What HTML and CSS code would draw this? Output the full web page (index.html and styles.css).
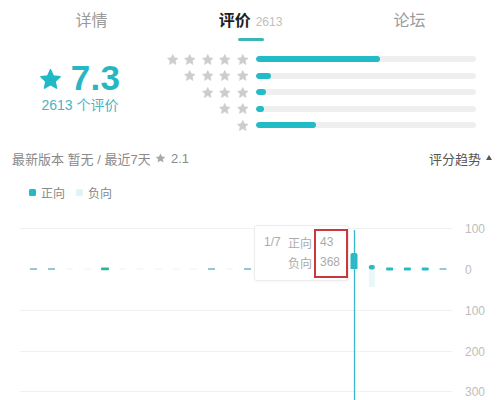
FILE: index.html
```html
<!DOCTYPE html>
<html lang="zh-CN">
<head>
<meta charset="utf-8">
<title>评价</title>
<link rel="stylesheet" href="styles.css">
</head>
<body>
<div class="page">
  <nav class="tabs">
    <div class="tab"><span class="tab-label">详情</span></div>
    <div class="tab tab-active">
      <span class="tab-label"><b>评价</b><span class="tab-count">2613</span></span>
      <i class="tab-bar"></i>
    </div>
    <div class="tab"><span class="tab-label">论坛</span></div>
  </nav>

  <section class="summary">
    <div class="score">
      <div class="score-main">
        <svg class="score-star" viewBox="1.5 1 21 20"><path d="M12 1.8l2.9 6.2 6.7.8-5 4.6 1.4 6.7L12 16.7 6 20.1l1.4-6.7-5-4.6 6.7-.8z"/></svg>
        <span class="score-num">7.3</span>
      </div>
      <div class="score-count">2613 个评价</div>
    </div>
    <div class="dist">
      <div class="dist-row">
        <div class="stars">
          <svg class="star" viewBox="1.5 1 21 20"><path d="M12 1.8l2.9 6.2 6.7.8-5 4.6 1.4 6.7L12 16.7 6 20.1l1.4-6.7-5-4.6 6.7-.8z"/></svg>
          <svg class="star" viewBox="1.5 1 21 20"><path d="M12 1.8l2.9 6.2 6.7.8-5 4.6 1.4 6.7L12 16.7 6 20.1l1.4-6.7-5-4.6 6.7-.8z"/></svg>
          <svg class="star" viewBox="1.5 1 21 20"><path d="M12 1.8l2.9 6.2 6.7.8-5 4.6 1.4 6.7L12 16.7 6 20.1l1.4-6.7-5-4.6 6.7-.8z"/></svg>
          <svg class="star" viewBox="1.5 1 21 20"><path d="M12 1.8l2.9 6.2 6.7.8-5 4.6 1.4 6.7L12 16.7 6 20.1l1.4-6.7-5-4.6 6.7-.8z"/></svg>
          <svg class="star" viewBox="1.5 1 21 20"><path d="M12 1.8l2.9 6.2 6.7.8-5 4.6 1.4 6.7L12 16.7 6 20.1l1.4-6.7-5-4.6 6.7-.8z"/></svg>
        </div>
        <div class="track"><div class="fill" style="width:56.4%"></div></div>
      </div>
      <div class="dist-row">
        <div class="stars">
          <svg class="star" viewBox="1.5 1 21 20"><path d="M12 1.8l2.9 6.2 6.7.8-5 4.6 1.4 6.7L12 16.7 6 20.1l1.4-6.7-5-4.6 6.7-.8z"/></svg>
          <svg class="star" viewBox="1.5 1 21 20"><path d="M12 1.8l2.9 6.2 6.7.8-5 4.6 1.4 6.7L12 16.7 6 20.1l1.4-6.7-5-4.6 6.7-.8z"/></svg>
          <svg class="star" viewBox="1.5 1 21 20"><path d="M12 1.8l2.9 6.2 6.7.8-5 4.6 1.4 6.7L12 16.7 6 20.1l1.4-6.7-5-4.6 6.7-.8z"/></svg>
          <svg class="star" viewBox="1.5 1 21 20"><path d="M12 1.8l2.9 6.2 6.7.8-5 4.6 1.4 6.7L12 16.7 6 20.1l1.4-6.7-5-4.6 6.7-.8z"/></svg>
        </div>
        <div class="track"><div class="fill" style="width:6.8%"></div></div>
      </div>
      <div class="dist-row">
        <div class="stars">
          <svg class="star" viewBox="1.5 1 21 20"><path d="M12 1.8l2.9 6.2 6.7.8-5 4.6 1.4 6.7L12 16.7 6 20.1l1.4-6.7-5-4.6 6.7-.8z"/></svg>
          <svg class="star" viewBox="1.5 1 21 20"><path d="M12 1.8l2.9 6.2 6.7.8-5 4.6 1.4 6.7L12 16.7 6 20.1l1.4-6.7-5-4.6 6.7-.8z"/></svg>
          <svg class="star" viewBox="1.5 1 21 20"><path d="M12 1.8l2.9 6.2 6.7.8-5 4.6 1.4 6.7L12 16.7 6 20.1l1.4-6.7-5-4.6 6.7-.8z"/></svg>
        </div>
        <div class="track"><div class="fill" style="width:4.6%"></div></div>
      </div>
      <div class="dist-row">
        <div class="stars">
          <svg class="star" viewBox="1.5 1 21 20"><path d="M12 1.8l2.9 6.2 6.7.8-5 4.6 1.4 6.7L12 16.7 6 20.1l1.4-6.7-5-4.6 6.7-.8z"/></svg>
          <svg class="star" viewBox="1.5 1 21 20"><path d="M12 1.8l2.9 6.2 6.7.8-5 4.6 1.4 6.7L12 16.7 6 20.1l1.4-6.7-5-4.6 6.7-.8z"/></svg>
        </div>
        <div class="track"><div class="fill" style="width:3.7%"></div></div>
      </div>
      <div class="dist-row">
        <div class="stars">
          <svg class="star" viewBox="1.5 1 21 20"><path d="M12 1.8l2.9 6.2 6.7.8-5 4.6 1.4 6.7L12 16.7 6 20.1l1.4-6.7-5-4.6 6.7-.8z"/></svg>
        </div>
        <div class="track"><div class="fill" style="width:27.3%"></div></div>
      </div>
    </div>
  </section>

  <div class="trend-head">
    <span class="recent">最新版本 暂无 / 最近7天 <svg class="mini-star" viewBox="1.5 1 21 20"><path d="M12 1.8l2.9 6.2 6.7.8-5 4.6 1.4 6.7L12 16.7 6 20.1l1.4-6.7-5-4.6 6.7-.8z"/></svg> 2.1</span>
    <span class="trend-toggle">评分趋势<span class="caret"></span></span>
  </div>

  <div class="legend">
    <span class="legend-item"><i class="swatch swatch-pos"></i>正向</span>
    <span class="legend-item"><i class="swatch swatch-neg"></i>负向</span>
  </div>

  <div class="chart">
    <svg class="chart-svg" width="501" height="190" viewBox="0 0 501 190">
      <g class="grid">
        <line x1="20" x2="452" y1="18.5" y2="18.5"/>
        <line x1="20" x2="452" y1="100.5" y2="100.5"/>
        <line x1="20" x2="452" y1="141.5" y2="141.5"/>
        <line x1="20" x2="452" y1="181.5" y2="181.5"/>
      </g>
      <g class="axis">
        <text x="465" y="22.5">100</text>
        <text x="465" y="63.5">0</text>
        <text x="465" y="104.5">100</text>
        <text x="465" y="145.5">200</text>
        <text x="465" y="185.5">300</text>
      </g>
      <g class="faint">
        <rect x="66" y="58.5" width="7" height="1.2"/>
        <rect x="84" y="58.5" width="7" height="1.2"/>
        <rect x="119" y="58.5" width="7" height="1.2"/>
        <rect x="137" y="58.5" width="7" height="1.2"/>
        <rect x="155" y="58.5" width="7" height="1.2"/>
        <rect x="173" y="58.5" width="7" height="1.2"/>
        <rect x="190" y="58.5" width="7" height="1.2"/>
        <rect x="226" y="58.5" width="7" height="1.2"/>
      </g>
      <g class="dash">
        <rect x="30" y="58.2" width="7" height="1.6"/>
        <rect x="48" y="58.2" width="7" height="1.6"/>
        <rect x="208" y="58.2" width="7" height="1.6"/>
        <rect x="244" y="58.2" width="7" height="1.6"/>
        <rect x="439.5" y="58.2" width="7" height="1.6"/>
      </g>
      <rect class="green" x="101" y="57.6" width="8" height="2.6" rx="1"/>
      <rect class="neg" x="368.8" y="59" width="6" height="18"/>
      <rect class="pos" x="368.8" y="55" width="6" height="4.5" rx="2"/>
      <rect class="pos" x="386.1" y="57.6" width="7" height="2.8" rx="1"/>
      <rect class="pos" x="403.9" y="57.6" width="7" height="2.8" rx="1"/>
      <rect class="pos" x="421.7" y="57.6" width="7" height="2.8" rx="1"/>
      <path class="pos" d="M350.5 59V45a2 2 0 0 1 2-2h3a2 2 0 0 1 2 2v14z"/>
      <line class="cursor" x1="354.5" x2="354.5" y1="20" y2="190"/>
    </svg>
    <div class="tooltip">
      <span class="tip-idx">1/7</span><span>正向</span><span>43</span>
      <span></span><span>负向</span><span>368</span>
    </div>
    <div class="highlight"></div>
  </div>
</div>
</body>
</html>
```

FILE: styles.css
```css
* { box-sizing: border-box; }
html, body { margin: 0; padding: 0; background: #fff; }
body {
  font-family: "Liberation Sans", "Noto Sans CJK SC", sans-serif;
  color: #333;
  width: 501px;
  height: 400px;
  overflow: hidden;
}
.page { width: 501px; }

/* tabs */
.tabs {
  display: grid;
  grid-template-columns: repeat(3, 1fr);
  padding: 0 12px;
  height: 42px;
}
.tab {
  display: flex;
  flex-direction: column;
  align-items: center;
}
.tab-label {
  margin-top: 11px;
  line-height: 20px;
  font-size: 16px;
  color: #9a9a9a;
  white-space: nowrap;
}
.tab-active .tab-label b { color: #1e1e1e; font-weight: 700; }
.tab-count {
  font-size: 12px;
  color: #c0c0c0;
  margin-left: 5px;
}
.tab-bar {
  display: block;
  margin-top: 6px;
  width: 26px;
  height: 3px;
  border-radius: 2px;
  background: #3cb6b6;
}

/* summary */
.summary {
  display: flex;
  height: 91px;
}
.score {
  width: 160px;
  display: flex;
  flex-direction: column;
  align-items: center;
  padding-top: 18px;
}
.score-main {
  display: flex;
  align-items: center;
  height: 36px;
  gap: 10px;
}
.score-star {
  width: 21px;
  height: 20px;
  fill: #22b9c6;
  stroke: #22b9c6;
  stroke-width: 1.5;
  stroke-linejoin: round;
  margin-top: 1px;
}
.score-num {
  font-size: 35px;
  line-height: 36px;
  font-weight: 700;
  color: #27b7c3;
  letter-spacing: 0.3px;
}
.score-count {
  margin-top: 0px;
  font-size: 14px;
  line-height: 18px;
  color: #4bb3c2;
}
.dist {
  flex: 1;
  padding: 8.75px 25px 0 0;
}
.dist-row {
  display: flex;
  align-items: center;
  height: 16.5px;
  gap: 8px;
}
.stars {
  width: 88px;
  display: flex;
  justify-content: flex-end;
  gap: 6px;
}
.star {
  width: 11.5px;
  height: 11px;
  fill: #cdcdcd;
  stroke: #cdcdcd;
  stroke-width: 1.2;
  stroke-linejoin: round;
}
.track {
  flex: 1;
  height: 6px;
  border-radius: 3px;
  background: #efefef;
  overflow: hidden;
}
.fill {
  height: 100%;
  border-radius: 3px;
  background: #22bcc7;
}

/* trend header */
.trend-head {
  display: flex;
  justify-content: space-between;
  align-items: center;
  margin-top: 15px;
  padding: 0 9px 0 12px;
  height: 20px;
  font-size: 13px;
}
.recent { color: #8a8a8a; display: flex; align-items: center; white-space: pre; }
.mini-star {
  width: 11px;
  height: 10px;
  margin: 0 1px;
  fill: #aaa;
}
.trend-toggle { color: #555; display: flex; align-items: center; }
.caret {
  margin-left: 5px;
  width: 0;
  height: 0;
  border-left: 3.5px solid transparent;
  border-right: 3.5px solid transparent;
  border-bottom: 5px solid #555;
  margin-top: -1px;
}

/* legend */
.legend {
  display: flex;
  gap: 11px;
  margin-top: 16px;
  padding-left: 29px;
  height: 16px;
  align-items: center;
  font-size: 12px;
  color: #888;
}
.legend-item { display: flex; align-items: center; gap: 5px; }
.swatch {
  display: block;
  width: 7px;
  height: 7px;
  border-radius: 1.5px;
}
.swatch-pos { background: #22b9c6; }
.swatch-neg { background: #e0f5f2; }

/* chart */
.chart {
  position: relative;
  margin-top: 10px;
  height: 190px;
}
.chart-svg { display: block; }
.grid line { stroke: #f1f1f1; stroke-width: 1; }
.axis text {
  font-family: "Liberation Sans", sans-serif;
  font-size: 12px;
  fill: #bdbdbd;
}
.faint rect { fill: #eef6f6; }
.dash rect { fill: #7cbcc2; }
.green { fill: #2ab59c; }
.pos { fill: #25bcc6; }
.neg { fill: #e9f7f6; }
.cursor { stroke: #3bb7ca; stroke-width: 1.3; }

.tooltip {
  position: absolute;
  left: 254px;
  top: 15px;
  width: 95px;
  height: 56px;
  background: #fff;
  border: 1px solid #ececec;
  border-radius: 3px;
  box-shadow: 0 1px 3px rgba(0,0,0,0.04);
  padding: 6px 0 0 9px;
  display: grid;
  grid-template-columns: 24px 32px auto;
  grid-auto-rows: 20px;
  align-items: center;
  font-size: 12px;
  color: #ababab;
}
.highlight {
  position: absolute;
  left: 314px;
  top: 19px;
  width: 34px;
  height: 49px;
  border: 2px solid #c9383b;
}
```
